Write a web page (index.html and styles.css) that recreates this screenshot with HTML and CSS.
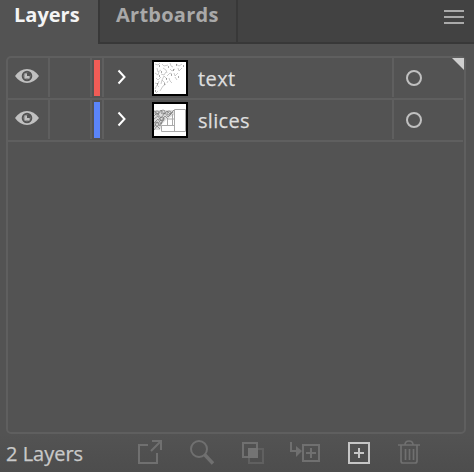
FILE: index.html
```html
<!DOCTYPE html>
<html lang="en">
<head>
<meta charset="utf-8">
<title>Layers</title>
<link rel="stylesheet" href="styles.css">
</head>
<body>
<div class="panel">
  <header class="tabs">
    <div class="tab active"><span class="label-layers">Layers</span></div>
    <div class="tab idle"><span class="label-artboards">Artboards</span></div>
    <div class="menu"><i></i><i></i><i></i></div>
  </header>
  <main class="list">
    <div class="row">
      <div class="cell eye"><svg width="24" height="16" viewBox="0 0 24 16"><path fill="#c0c0c0" d="M0 8Q5 1 12 1T24 8Q19 15 12 15T0 8Z"/><circle cx="12" cy="8" r="4.300" fill="#c0c0c0" stroke="#535353" stroke-width="2"/><circle cx="12" cy="8" r="2.700" fill="#535353"/><circle cx="12" cy="8" r="2.500" fill="#c0c0c0"/><path fill="#535353" d="M12 5h3v3h-3z"/></svg></div>
      <div class="cell lock"></div>
      <div class="cell swatch"><i class="red"></i></div>
      <div class="cell main">
        <svg class="chevron" width="10" height="16" viewBox="0 0 10 16"><path d="M1.500 1.500 7.500 8l-6 6.500" fill="none" stroke="#fff" stroke-width="2"/></svg>
        <div class="thumb"><svg width="32" height="32" viewBox="0 0 32 32"><g fill="none" stroke="#999" stroke-width=".5"><path d="M1 2l3 1 2-2M8 2l2 2 4-1M16 1l1 3 2 1M22 2l3 2 3-2M3 6l1 4 3-2M9 6l3 2 1 3M16 7l2 2 3-2M24 6l1 3 3-3M1 11l3 2 1-3M7 12l3 1 2-3M13 14l3-3 2 1M20 11l1 3 3-3M2 16l2 2 3-3M8 18l2-4 3 3M15 16l1 3 2 2M21 15l2 3M1 21l3 1 1-3M7 22l1-4 3 3M13 21l1-2M1 27l2-4 2 2M6 29l3-5 3-2M2 31l2-2"/></g><path d="M5 4h1M14 5h1M22 3h1M29 4h1M7 10h1M17 13h1M12 17h1M5 14h1M10 22h1M24 15h1M3 22h1M19 8h1M1 29h1" stroke="#555"/></svg></div>
        <span class="name name-text">text</span>
      </div>
      <div class="cell target"><i></i></div>
    </div>
    <div class="row">
      <div class="cell eye"><svg width="24" height="16" viewBox="0 0 24 16"><path fill="#c0c0c0" d="M0 8Q5 1 12 1T24 8Q19 15 12 15T0 8Z"/><circle cx="12" cy="8" r="4.300" fill="#c0c0c0" stroke="#535353" stroke-width="2"/><circle cx="12" cy="8" r="2.700" fill="#535353"/><circle cx="12" cy="8" r="2.500" fill="#c0c0c0"/><path fill="#535353" d="M12 5h3v3h-3z"/></svg></div>
      <div class="cell lock"></div>
      <div class="cell swatch"><i class="blue"></i></div>
      <div class="cell main">
        <svg class="chevron" width="10" height="16" viewBox="0 0 10 16"><path d="M1.500 1.500 7.500 8l-6 6.500" fill="none" stroke="#fff" stroke-width="2"/></svg>
        <div class="thumb"><svg width="32" height="32" viewBox="0 0 32 32"><path fill="#ddd" d="M0 6h20v5l-7 4-5 5-2 6H0z"/><g fill="none" stroke="#777" stroke-width=".7"><path d="M0 7l4 3 3-4 3 4 3-3 3 3 4-4M0 12l3-3 4 5 4-5 3 4 5-5M0 15l4-3 3 5 4-5 3 3M0 19l4-4 3 5 3-6M0 23l3-5 3 4 2-4M0 26l3-4 3 3"/><circle cx="3" cy="9" r="2"/><circle cx="9" cy="8" r="2"/><circle cx="15" cy="9" r="2"/><circle cx="3" cy="20" r="2"/><circle cx="8" cy="15" r="2"/></g><path fill="none" stroke="#aaa" d="M20.500 5.500h11v22h-24v-6h13M20.500 5.500v22M13.500 21v-6h6.500M18.500 10v11"/></svg></div>
        <span class="name name-slices">slices</span>
      </div>
      <div class="cell target"><i></i></div>
    </div>
    <div class="corner"></div>
  </main>
  <footer class="footer">
    <span class="count">2 Layers</span>
    <svg class="tools" width="300" height="38" viewBox="0 0 300 38" fill="none" stroke="#707070" stroke-width="2">
      <path d="M13 11H4v18h18V19M17 7h9v9M25.500 7.500 16 17"/>
      <circle cx="64" cy="15" r="8"/><path d="M69.500 20.500l8.500 9" stroke-width="3.500"/>
      <path d="M114 15h14v14h-14z" stroke="#606060"/><path d="M108 9h14v14h-14z"/><path d="M113 14h10v10h-10z" fill="#747474" stroke="none"/>
      <path d="M156 8v9h6"/><path d="M161 12l6 5-6 6z" fill="#707070" stroke="none"/><path d="M168 11h16v16h-16zM171 19h10M176 14v10"/>
      <path d="M214 9h20v20h-20zM219 19h10M224 14v10" stroke="#c6c6c6"/>
      <path d="M263 11h22M270 11q0-4 4-4t4 4M266 11v16q0 2 2 2h12q2 0 2-2V11M270.500 15v11M274.500 15v11M278.500 15v11" stroke-width="1.700"/>
    </svg>
  </footer>
</div>
</body>
</html>
```
FILE: styles.css
```css
* { box-sizing: border-box; }
body { margin: 0; background: #535353; font-family: "Open Sans", "Noto Sans", sans-serif; }
.panel { width: 474px; height: 472px; display: flex; flex-direction: column; overflow: hidden; background: #535353; }
.tabs { display: flex; height: 44px; font-size: 20px; font-weight: 700; line-height: 30px; white-space: nowrap; }
.tab.active { width: 98px; padding-left: 14px; color: #f4f4f4; }
.tab.idle { width: 140px; padding-left: 16px; color: #a9a9a9; background: #434343; border: solid #383838; border-width: 0 2px 2px; }
.menu { flex: 1; display: flex; flex-direction: column; align-items: flex-end; gap: 4px; padding: 10px 10px 0; background: #424242; border-bottom: 2px solid #383838; }
.menu i { width: 20px; height: 2px; background: #aaa; }
.label-artboards { letter-spacing: .25px; }
.list { position: relative; width: 460px; height: 378px; margin: 12px 0 0 6px; border: 2px solid #5f5f5f; border-radius: 5px; }
.row { display: flex; width: 455px; height: 42px; border-bottom: 2px solid #5f5f5f; }
.cell { height: 39px; display: flex; flex: none; border-right: 2px solid #5f5f5f; }
.eye { width: 42px; padding: 10px 0 0 7px; }
.lock { width: 42px; }
.swatch { width: 12px; padding: 2px; }
.swatch i { width: 6px; height: 36px; }
.red { background: #f05c56; }
.blue { background: #5b85fa; }
.main { width: 290px; padding: 2px 0 0 13px; }
.chevron { margin-top: 9px; }
.thumb { width: 36px; height: 36px; margin-left: 25px; border: 2px solid #000; background: #fff; flex: none; }
.thumb svg { display: block; }
.name { margin-left: 10px; font-size: 20px; font-weight: 500; line-height: 37px; color: #dedede; -webkit-text-stroke: .25px #dedede; }
.name-text { letter-spacing: .4px; }
.name-slices { letter-spacing: .3px; }
.target { border: 0; padding: 12px 0 0 12px; }
.target i { width: 16px; height: 16px; border: 2px solid #c0c0c0; border-radius: 50%; }
.corner { position: absolute; right: 0; top: 0; width: 12px; height: 12px; background: #cecece; clip-path: polygon(0 0, 100% 0, 100% 100%); }
.footer { display: flex; height: 38px; background: linear-gradient(#535353, #4d4d4d); }
.count { width: 135px; padding-left: 6px; font-size: 20px; font-weight: 500; line-height: 39px; color: #c9c9c9; -webkit-text-stroke: .25px #c9c9c9; white-space: nowrap; }
.tools { flex: none; }
```
